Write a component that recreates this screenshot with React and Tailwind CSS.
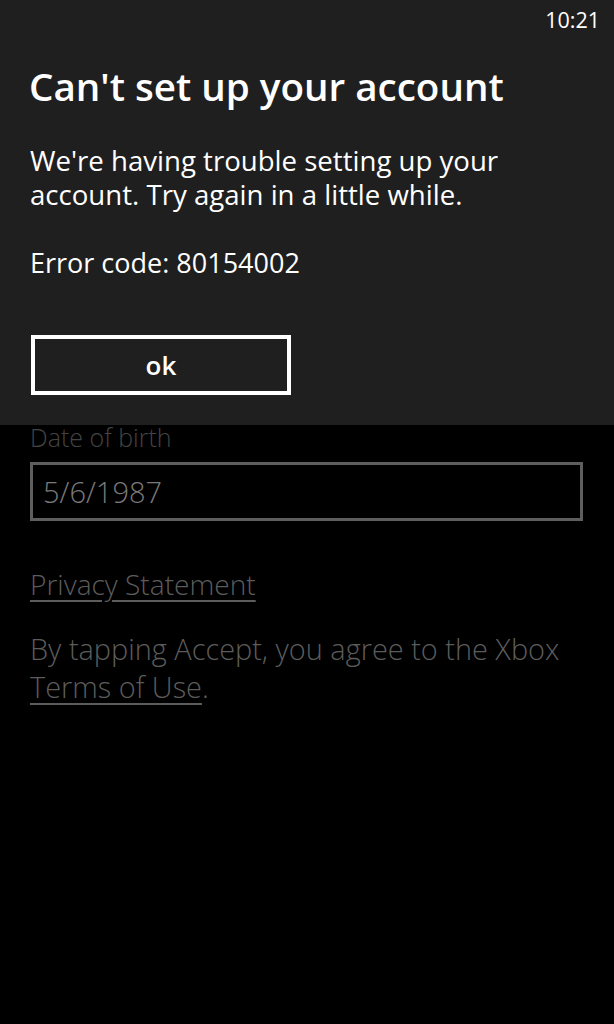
export default function App() {
  const font = { fontFamily: '"Open Sans", "Noto Sans", sans-serif' };
  return (
    <div className="w-[614px] h-[1024px] bg-black overflow-hidden" style={font}>
      <div className="h-[425px] bg-[#1f1f1f] flex flex-col">
        <div className="flex justify-end pr-[14px] pt-[6px] h-[34px]">
          <span className="text-[21.5px] leading-[28px] text-white">10:21</span>
        </div>
        <h1 className="pl-[29px] mt-[28px] text-[38.6px] leading-[48px] font-semibold text-white">
          Can't set up your account
        </h1>
        <p className="pl-[30px] mt-[33px] text-[27.6px] leading-[34px] text-white">
          We're having trouble setting up your
          <br />
          account. Try again in a little while.
        </p>
        <p className="pl-[30px] mt-[35px] text-[27px] leading-[34px] text-white">
          Error code: 80154002
        </p>
        <div className="pl-[31px] mt-[55px]">
          <button className="w-[260px] h-[60px] border-[4px] border-white flex items-center justify-center text-white text-[26px] font-semibold">
            ok
          </button>
        </div>
      </div>
      <div className="px-[30px]">
        <div className="mt-[-3px] text-[25px] leading-[30px] font-light text-[#444444]">Date of birth</div>
        <div className="mt-[10px] w-[553px] h-[59px] border-[3px] border-[#5e5e5e] flex items-center pl-[10px] text-[29px] font-light text-[#7a7a7a]">
          5/6/1987
        </div>
        <div className="mt-[46px] text-[28.1px] leading-[34px] font-light text-[#5c5c5c] underline underline-offset-[5px]">
          Privacy Statement
        </div>
        <p className="mt-[29px] text-[28.9px] leading-[38px] font-light text-[#5c5c5c]">
          By tapping Accept, you agree to the Xbox
          <br />
          <span className="underline underline-offset-[5px]">Terms of Use</span>.
        </p>
      </div>
    </div>
  );
}
